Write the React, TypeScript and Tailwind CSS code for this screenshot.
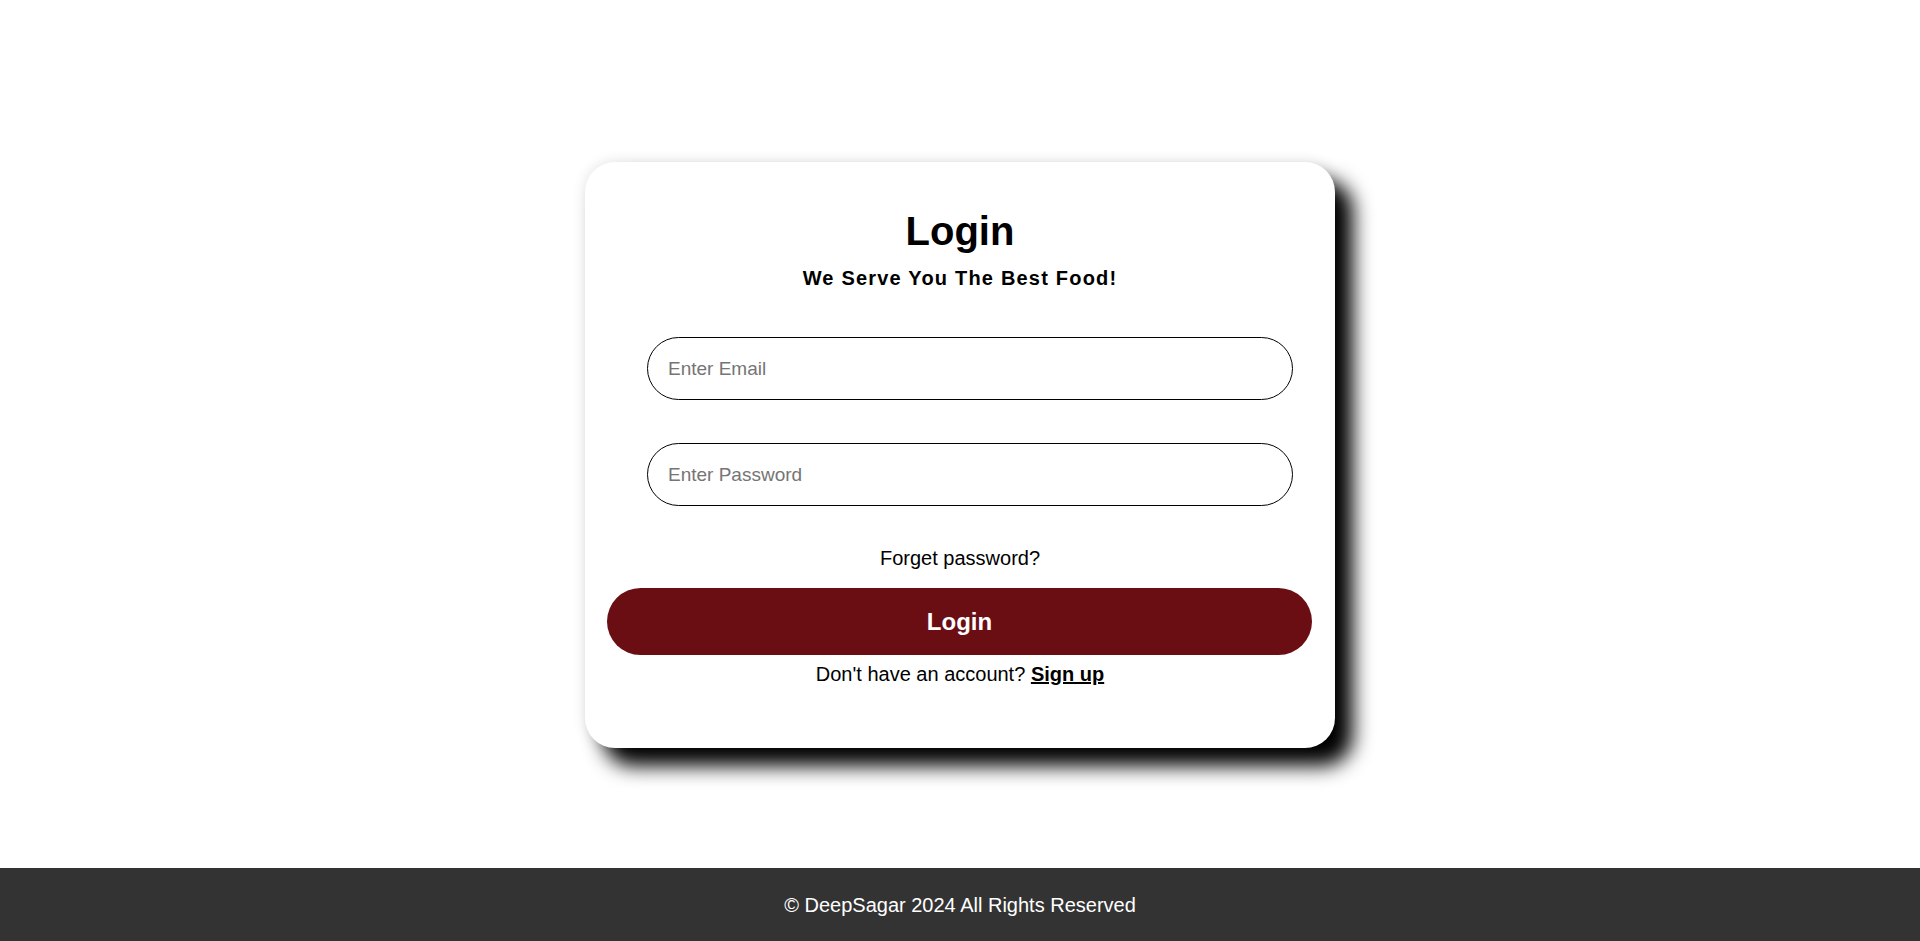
import { useState } from "react";

// Login page: centered card with email/password fields and a dark footer.
export default function App() {
  const [email, setEmail] = useState("");
  const [password, setPassword] = useState("");

  return (
    <div className="min-h-screen flex flex-col bg-white font-['Liberation_Sans',Arial,sans-serif] text-black">
      <main className="flex-1 flex justify-center pt-[162px]">
        <form
          onSubmit={(e) => e.preventDefault()}
          className="w-[750px] h-[586px] bg-white rounded-[30px] flex flex-col shadow-[18px_18px_20px_#000,0_0_14px_rgba(0,0,0,0.12)]"
        >
          <h1 className="mt-[46px] text-center text-[40px] leading-[46px] font-bold">Login</h1>
          <p className="mt-[13px] text-center text-[20px] leading-[23px] font-bold tracking-[1.2px]">
            We Serve You The Best Food!
          </p>

          <input
            type="email"
            value={email}
            onChange={(e) => setEmail(e.target.value)}
            placeholder="Enter Email"
            className="mt-[47px] ml-[62px] w-[646px] h-[63px] rounded-full border border-black px-[20px] text-[19px] outline-none placeholder:text-[#757575]"
          />
          <input
            type="password"
            value={password}
            onChange={(e) => setPassword(e.target.value)}
            placeholder="Enter Password"
            className="mt-[43px] ml-[62px] w-[646px] h-[63px] rounded-full border border-black px-[20px] text-[19px] outline-none placeholder:text-[#757575]"
          />

          <p className="mt-[41px] text-center text-[20px] leading-[23px]">Forget password?</p>

          <button
            type="submit"
            className="mt-[18px] ml-[22px] w-[705px] h-[67px] rounded-full bg-[#6a0e14] text-white text-[24px] font-bold"
          >
            Login
          </button>

          <p className="mt-[8px] text-center text-[20px] leading-[23px]">
            Don't have an account?{" "}
            <a href="#" className="font-bold underline text-black">Sign up</a>
          </p>
        </form>
      </main>

      <footer className="h-[73px] bg-[#333333] flex items-center justify-center text-white text-[20px]">
        © DeepSagar 2024 All Rights Reserved
      </footer>
    </div>
  );
}
